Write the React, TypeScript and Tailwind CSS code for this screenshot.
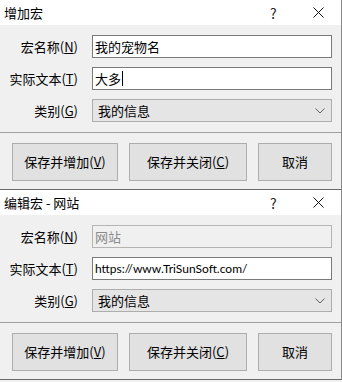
import React from "react";

const FONT = { fontFamily: '"Noto Sans CJK SC", "Noto Sans", sans-serif' };

function Acc({ pre, k }: { pre: string; k: string }) {
  return (
    <span>
      {pre}(<span className="underline underline-offset-[1px]">{k}</span>)
    </span>
  );
}

function Chevron() {
  return (
    <svg width="10" height="6" viewBox="0 0 10 6" className="shrink-0">
      <path d="M0.5 0.5 L5 5 L9.5 0.5" fill="none" stroke="#606060" strokeWidth="1" />
    </svg>
  );
}

function Dialog({ title, edit }: { title: string; edit: boolean }) {
  return (
    <div className="h-[190px] flex flex-col border-r border-b border-r-[#8a8a8a] border-b-[#6a6a6a]">
      <div className="h-[25px] bg-white flex items-center pl-[4px] text-[13px] text-black relative">
        <span>{title}</span>
        <span className="absolute left-[270px] top-[3px] text-[14px] text-[#222]">?</span>
        <svg className="absolute left-[313px] top-[7px]" width="11" height="11" viewBox="0 0 11 11">
          <path d="M0.5 0.5 L10.5 10.5 M10.5 0.5 L0.5 10.5" stroke="#111" strokeWidth="1" />
        </svg>
      </div>
      <div className="flex-1 bg-[#f0f0f0] flex flex-col text-[13px] text-black">
        <div className="flex flex-col gap-[9px] pt-[10px]">
          <div className="flex items-center h-[23px]">
            <div className="w-[78px] text-right"><Acc pre="宏名称" k="N" /></div>
            {edit ? (
              <div className="ml-[14px] w-[240px] h-[23px] border border-[#b4b4b4] bg-[#f0f0f0] flex items-center pl-[2px] text-[#8a8a8a]">网站</div>
            ) : (
              <div className="ml-[14px] w-[240px] h-[23px] border border-[#7a7a7a] bg-white flex items-center pl-[2px]">我的宠物名</div>
            )}
          </div>
          <div className="flex items-center h-[23px]">
            <div className="w-[78px] text-right"><Acc pre="实际文本" k="T" /></div>
            <div className="ml-[14px] w-[240px] h-[23px] border border-[#7a7a7a] bg-white flex items-center pl-[2px]">
              {edit ? (
                <span style={{ fontFamily: 'Lato, "Noto Sans", sans-serif' }} className="text-[12px]">https://www.TriSunSoft.com/</span>
              ) : (
                <>
                  <span>大多</span>
                  <span className="inline-block w-[1px] h-[15px] bg-black ml-[1px]" />
                </>
              )}
            </div>
          </div>
          <div className="flex items-center h-[23px]">
            <div className="w-[78px] text-right"><Acc pre="类别" k="G" /></div>
            <div className="ml-[14px] w-[240px] h-[23px] border border-[#adadad] bg-[#e5e5e5] flex items-center pl-[5px] pr-[6px] justify-between">
              <span>我的信息</span>
              <Chevron />
            </div>
          </div>
        </div>
        <div className="mt-[10px] h-px bg-[#a0a0a0]" />
        <div className="flex pl-[12px] gap-[11px] mt-[10px]">
          <div className="w-[106px] h-[38px] border border-[#adadad] bg-[#e1e1e1] flex items-center justify-center"><Acc pre="保存并增加" k="V" /></div>
          <div className="w-[118px] h-[38px] border border-[#adadad] bg-[#e1e1e1] flex items-center justify-center"><Acc pre="保存并关闭" k="C" /></div>
          <div className="w-[74px] h-[38px] border border-[#adadad] bg-[#e1e1e1] flex items-center justify-center">取消</div>
        </div>
      </div>
    </div>
  );
}

export default function App() {
  return (
    <div className="w-[342px] h-[382px] bg-[#f0f0f0] flex flex-col" style={FONT}>
      <Dialog title="增加宏" edit={false} />
      <Dialog title="编辑宏 - 网站" edit={true} />
    </div>
  );
}
